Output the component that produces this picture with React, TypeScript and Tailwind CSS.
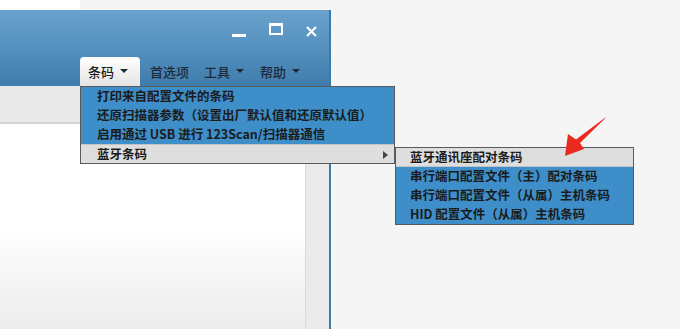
const font = { fontFamily: '"Noto Sans CJK SC", "Noto Sans", sans-serif' };

function Caret() {
  return <span className="inline-block w-0 h-0 border-l-[4px] border-r-[4px] border-t-[4px] border-l-transparent border-r-transparent border-t-[#1d2a36] ml-[6px] mb-[2px]" />;
}

const mainItems = [
  "打印来自配置文件的条码",
  "还原扫描器参数（设置出厂默认值和还原默认值）",
  "启用通过 USB 进行 123Scan/扫描器通信",
];

const subItems = [
  "串行端口配置文件（主）配对条码",
  "串行端口配置文件（从属）主机条码",
  "HID 配置文件（从属）主机条码",
];

export default function App() {
  return (
    <div className="relative w-[680px] h-[329px] overflow-hidden bg-[#f5f5f5] text-[#1b1b1b]" style={font}>
      {/* top strip */}
      <div className="flex h-[10px]">
        <div className="w-[80px] bg-white" />
      </div>

      {/* window */}
      <div className="w-[331px] h-[319px] flex flex-col border-r-2 border-[#3f79a6]">
        {/* title bar */}
        <div className="h-[76px] flex flex-col bg-gradient-to-b from-[#6aa2cc] via-[#5590bf] to-[#3f7cac]">
          <div className="flex items-start justify-end gap-[23px] pr-[12px] pt-[13px] h-[47px]">
            <div className="w-[14px] h-[3px] bg-white mt-[11px]" />
            <div className="w-[14px] h-[12px] border-2 border-t-[3px] border-white" />
            <svg width="11" height="11" viewBox="0 0 11 11" className="mt-[3px]">
              <path d="M1 1 L10 10 M10 1 L1 10" stroke="white" strokeWidth="2.2" />
            </svg>
          </div>
          <div className="flex items-end h-[29px] text-[13px] font-medium">
            <div className="ml-[80px] w-[60px] h-[29px] rounded-t-[4px] bg-gradient-to-b from-[#ffffff] to-[#e4e4e4] flex items-center pl-[8px]">
              条码<Caret />
            </div>
            <div className="h-[29px] flex items-center ml-[10px] text-[#1d2a36]">首选项</div>
            <div className="h-[29px] flex items-center ml-[15px] text-[#1d2a36]">工具<Caret /></div>
            <div className="h-[29px] flex items-center ml-[16px] text-[#1d2a36]">帮助<Caret /></div>
          </div>
        </div>

        {/* toolbar */}
        <div className="h-[38px] bg-[#e9e9e9] border-b-2 border-[#d2d2d2]" />

        {/* content */}
        <div className="flex-1 flex">
          <div className="flex-1 bg-gradient-to-b from-white via-white to-[#ececec]" />
          <div className="w-[24px] bg-[#eaeaea] border-l border-[#dadada]" />
        </div>
      </div>

      {/* main dropdown */}
      <div className="absolute left-[80px] top-[86px] w-[315px] bg-[#3d8ec9] border border-[#5a5a5a] text-[12.5px] font-semibold">
        {mainItems.map((t) => (
          <div key={t} className="h-[19px] flex items-center pl-[16px] whitespace-nowrap">{t}</div>
        ))}
        <div className="h-[19px] flex items-center pl-[16px] bg-[#dedede] border-t border-[#c4c4c4] relative">
          蓝牙条码
          <span className="absolute right-[6px] top-[6px] w-0 h-0 border-t-[4px] border-b-[4px] border-l-[5px] border-t-transparent border-b-transparent border-l-[#444]" />
        </div>
      </div>

      {/* submenu */}
      <div className="absolute left-[395px] top-[147px] w-[239px] bg-[#3d8ec9] border border-[#5a5a5a] text-[12.5px] font-semibold">
        <div className="h-[19px] flex items-center pl-[14px] bg-[#dedede] border-b border-[#c4c4c4]">蓝牙通讯座配对条码</div>
        {subItems.map((t) => (
          <div key={t} className="h-[19px] flex items-center pl-[14px] whitespace-nowrap">{t}</div>
        ))}
      </div>

      {/* red arrow */}
      <svg className="absolute left-[0px] top-[0px]" width="680" height="329" viewBox="0 0 680 329">
        <polygon points="606,117 604,119.5 580,143 584,149 565,156 568,134 576,139.5" fill="#ea2a1f" />
      </svg>
    </div>
  );
}
